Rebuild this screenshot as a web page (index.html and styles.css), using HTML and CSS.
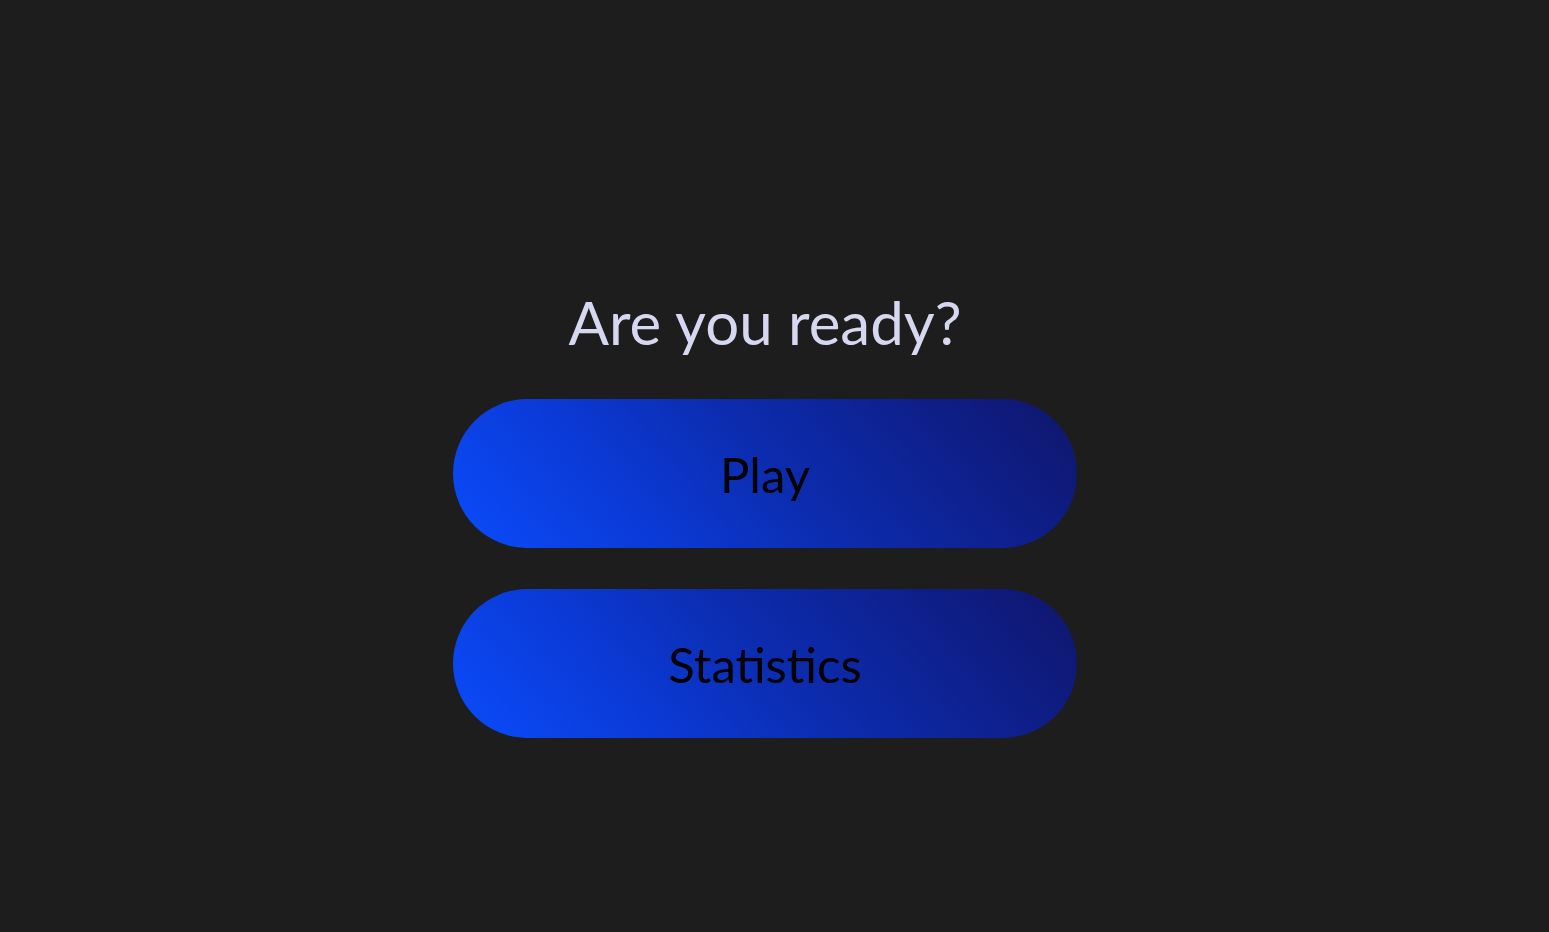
FILE: index.html
```html
<!DOCTYPE html>
<html lang="en">
<head>
<meta charset="utf-8">
<title>Are you ready?</title>
<link rel="stylesheet" href="styles.css">
</head>
<body>
<main class="menu">
  <h1 class="title">Are you ready?</h1>
  <button class="btn">Play</button>
  <button class="btn">Statistics</button>
</main>
</body>
</html>
```

FILE: styles.css
```css
html, body {
  margin: 0;
  height: 100%;
}
body {
  background: #1d1d1d;
  font-family: "Lato", "Noto Sans", sans-serif;
}
.menu {
  box-sizing: border-box;
  height: 100%;
  padding: 98px 19px 0 0;
  display: flex;
  flex-direction: column;
  align-items: center;
  justify-content: center;
  gap: 41px;
}
.title {
  margin: 0 0 6px;
  font-weight: 400;
  font-size: 60px;
  line-height: 1;
  color: #d5d8f0;
}
.btn {
  width: 624px;
  height: 149px;
  border: none;
  border-radius: 75px;
  background: linear-gradient(50deg, #0a4cfb 0%, #0b3ad6 28%, #0c2cae 52%, #0e1f8a 78%, #10166a 100%);
  color: #000;
  font-family: inherit;
  font-size: 49px;
  cursor: pointer;
}
```
